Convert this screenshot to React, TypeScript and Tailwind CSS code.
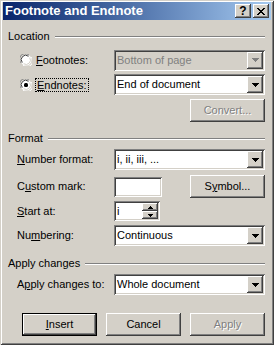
import React from "react";

const raised =
  "shadow-[inset_-1px_-1px_0_#404040,inset_1px_1px_0_#ffffff,inset_-2px_-2px_0_#808080,inset_2px_2px_0_#d4d0c8]";
const sunken =
  "shadow-[inset_1px_1px_0_#808080,inset_-1px_-1px_0_#ffffff,inset_2px_2px_0_#404040,inset_-2px_-2px_0_#d4d0c8]";

const U = ({ children }: { children: React.ReactNode }) => <span className="underline underline-offset-[1px]">{children}</span>;

const Arrow = ({ disabled }: { disabled?: boolean }) => (
  <svg width="7" height="4" viewBox="0 0 7 4">
    <path d="M0 0h7v1H0zM1 1h5v1H1zM2 2h3v1H2zM3 3h1v1H3z" fill={disabled ? "#808080" : "#000"} />
  </svg>
);

const Combo = ({ value, disabled }: { value: string; disabled?: boolean }) => (
  <div className={`relative flex h-[21px] w-[151px] items-center p-[2px] ${sunken} ${disabled ? "bg-[#d4d0c8]" : "bg-white"}`}>
    <span className={`flex-1 pl-[1px] ${disabled ? "text-[#808080]" : "text-black"}`}>{value}</span>
    <div className={`flex h-[17px] w-[16px] items-center justify-center bg-[#d4d0c8] ${raised}`}>
      <Arrow disabled={disabled} />
    </div>
  </div>
);

const Button = ({ children, disabled, isDefault }: { children: React.ReactNode; disabled?: boolean; isDefault?: boolean }) => (
  <div className={`h-[23px] w-[75px] bg-[#d4d0c8] ${isDefault ? "border border-black" : ""}`}>
    <div className={`flex h-full w-full items-center justify-center ${raised}`}>
      {disabled ? (
        <span className="text-[#808080] [text-shadow:1px_1px_0_#ffffff]">{children}</span>
      ) : (
        <span className="text-black">{children}</span>
      )}
    </div>
  </div>
);

const GroupLabel = ({ title }: { title: string }) => (
  <div className="flex h-[13px] items-center">
    <span className="pr-[5px] leading-[13px]">{title}</span>
    <div className="flex-1 h-[2px] border-t border-t-[#808080] border-b border-b-white" />
  </div>
);

const Radio = ({ checked }: { checked?: boolean }) => (
  <svg width="12" height="12" viewBox="0 0 12 12">
    <circle cx="6" cy="6" r="5.5" fill="#fff" />
    <path d="M1.2 9 A5.5 5.5 0 0 1 9 1.2" stroke="#808080" strokeWidth="1" fill="none" />
    <path d="M2.3 8.5 A4.4 4.4 0 0 1 8.5 2.3" stroke="#404040" strokeWidth="1" fill="none" />
    <path d="M3 11 A5.5 5.5 0 0 0 11 3" stroke="#fff" strokeWidth="1" fill="none" />
    <path d="M3.6 9.7 A4.4 4.4 0 0 0 9.7 3.6" stroke="#d4d0c8" strokeWidth="1" fill="none" />
    {checked && <rect x="4" y="4" width="4" height="4" rx="1.5" fill="#000" />}
  </svg>
);

const Row = ({ label, children, top }: { label: React.ReactNode; children: React.ReactNode; top: string }) => (
  <div className={`flex items-center pl-[9px] ${top}`}>
    <span className="w-[97px]">{label}</span>
    {children}
  </div>
);

export default function App() {
  return (
    <div className="h-[345px] w-[274px] bg-[#d4d0c8] p-[3px] pt-[2px] text-[11px] leading-[13px] text-black shadow-[inset_1px_1px_0_#d4d0c8,inset_-1px_-1px_0_#404040,inset_2px_2px_0_#ffffff,inset_-2px_-2px_0_#808080] [font-family:'Liberation_Sans',Arial,sans-serif]">
      <div className="flex h-[18px] items-center bg-gradient-to-r from-[#0a246a] to-[#a6caf0] pl-[2px] pr-[2px]">
        <span className="flex-1 text-[13px] font-bold leading-[16px] text-white">Footnote and Endnote</span>
        <div className={`flex h-[14px] w-[16px] items-center justify-center bg-[#d4d0c8] ${raised}`}>
          <span className="text-[12px] font-bold leading-none">?</span>
        </div>
        <div className={`ml-[2px] flex h-[14px] w-[16px] items-center justify-center bg-[#d4d0c8] ${raised}`}>
          <svg width="8" height="7" viewBox="0 0 8 7">
            <path d="M0 0h2v1H0zM6 0h2v1H6zM1 1h2v1H1zM5 1h2v1H5zM2 2h4v1H2zM3 3h2v1H3zM2 4h4v1H2zM1 5h2v1H1zM5 5h2v1H5zM0 6h2v1H0zM6 6h2v1H6z" fill="#000" />
          </svg>
        </div>
      </div>

      <div className="flex flex-col pl-[5px] pr-[6px]">
        <div className="mt-[10px]">
          <GroupLabel title="Location" />
        </div>

        <div className="mt-[7px] flex h-[20px] items-center">
          <div className="flex w-[106px] items-center pl-[12px]">
            <Radio />
            <span className="ml-[3px] px-[1px]"><U>F</U>ootnotes:</span>
          </div>
          <Combo value="Bottom of page" disabled />
        </div>

        <div className="mt-[4px] flex h-[21px] items-center">
          <div className="flex w-[106px] items-center pl-[12px]">
            <Radio checked />
            <span className="ml-[3px] border border-dotted border-black px-[1px] leading-[12px]"><U>E</U>ndnotes:</span>
          </div>
          <Combo value="End of document" />
        </div>

        <div className="mt-[4px] flex justify-end">
          <Button disabled>Convert...</Button>
        </div>

        <div className="mt-[10px]">
          <GroupLabel title="Format" />
        </div>

        <Row label={<><U>N</U>umber format:</>} top="mt-[4px]">
          <Combo value="i, ii, iii, ..." />
        </Row>

        <div className="mt-[5px] flex h-[23px] items-center pl-[9px]">
          <span className="w-[97px]">C<U>u</U>stom mark:</span>
          <div className={`h-[20px] w-[48px] bg-white ${sunken}`} />
          <div className="flex-1" />
          <Button>S<U>y</U>mbol...</Button>
        </div>

        <Row label={<><U>S</U>tart at:</>} top="mt-[3px]">
          <div className={`flex h-[20px] w-[46px] items-center bg-white p-[2px] ${sunken}`}>
            <span className="flex-1 pl-[1px]">i</span>
            <div className="flex h-[16px] w-[16px] flex-col">
              <div className={`flex h-[8px] items-center justify-center bg-[#d4d0c8] ${raised}`}>
                <svg width="5" height="3" viewBox="0 0 5 3"><path d="M2 0h1v1H2zM1 1h3v1H1zM0 2h5v1H0z" fill="#000" /></svg>
              </div>
              <div className={`flex h-[8px] items-center justify-center bg-[#d4d0c8] ${raised}`}>
                <svg width="5" height="3" viewBox="0 0 5 3"><path d="M0 0h5v1H0zM1 1h3v1H1zM2 2h1v1H2z" fill="#000" /></svg>
              </div>
            </div>
          </div>
        </Row>

        <Row label={<>Nu<U>m</U>bering:</>} top="mt-[4px]">
          <Combo value="Continuous" />
        </Row>

        <div className="mt-[11px]">
          <GroupLabel title="Apply changes" />
        </div>

        <Row label={<>A<U>p</U>ply changes to:</>} top="mt-[4px]">
          <Combo value="Whole document" />
        </Row>

        <div className="mt-[18px] flex gap-[9px] pl-[14px]">
          <Button isDefault><U>I</U>nsert</Button>
          <Button>Cancel</Button>
          <Button disabled>Apply</Button>
        </div>
      </div>
    </div>
  );
}
